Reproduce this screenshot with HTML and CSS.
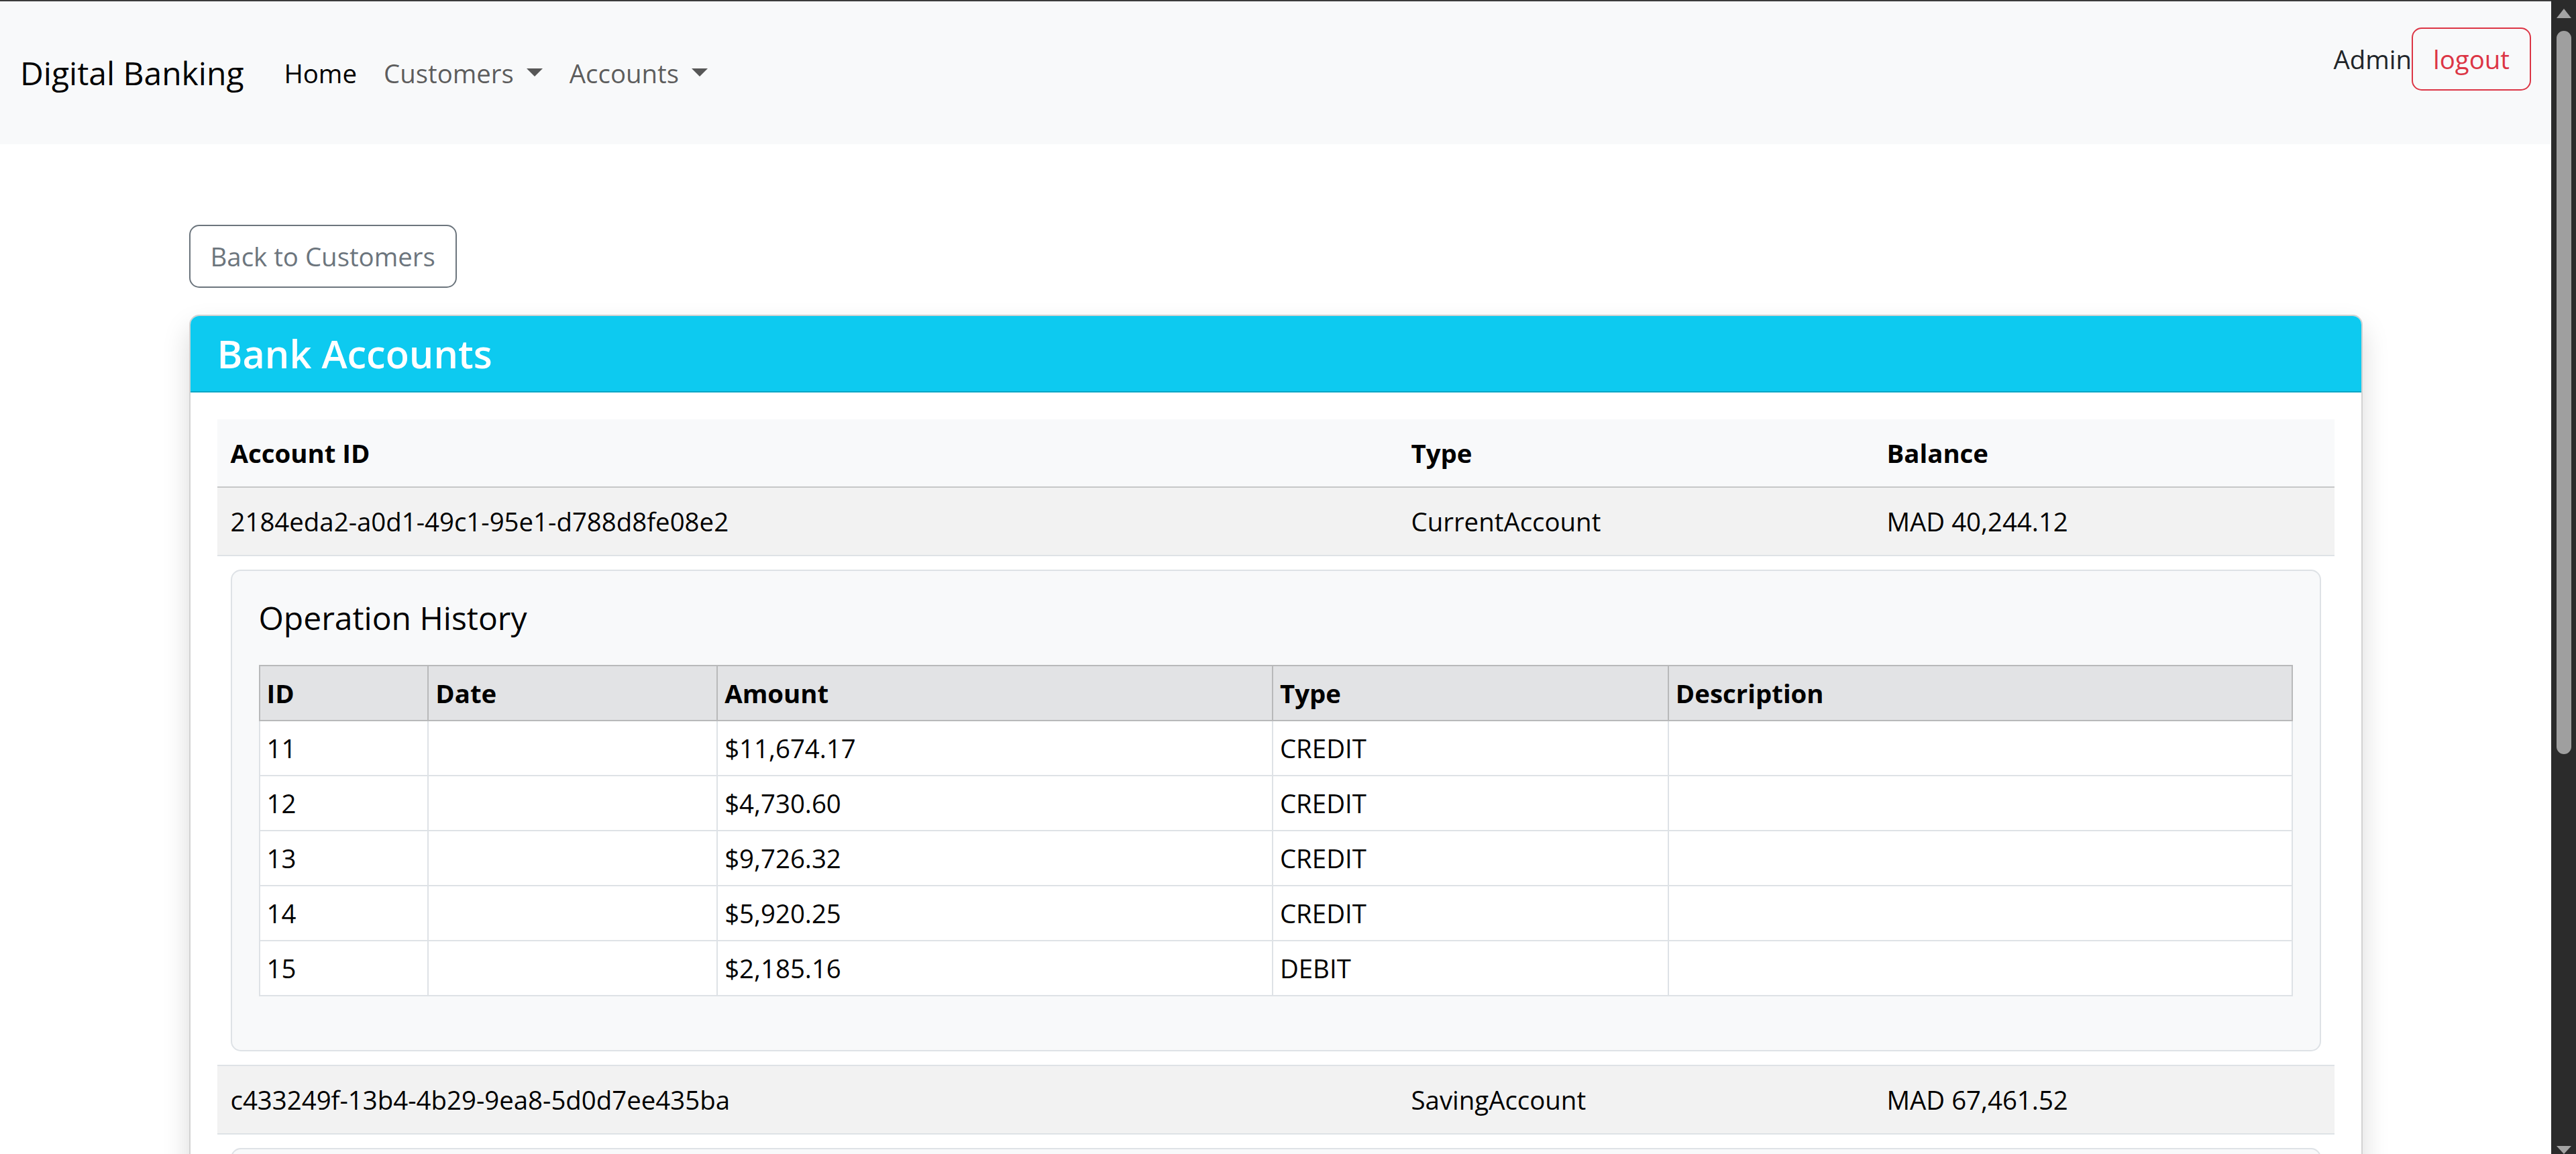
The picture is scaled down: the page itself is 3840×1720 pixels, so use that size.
FILE: index.html
```html
<!DOCTYPE html>
<html lang="en">
<head>
<meta charset="utf-8">
<title>Digital Banking</title>
<link rel="stylesheet" href="styles.css">
</head>
<body>
<div class="screen">
  <div class="page">
    <nav class="navbar">
      <a class="brand" href="#">Digital Banking</a>
      <ul class="nav">
        <li><a class="nav-link active" href="#">Home</a></li>
        <li><a class="nav-link dropdown" href="#">Customers</a></li>
        <li><a class="nav-link dropdown" href="#">Accounts</a></li>
      </ul>
      <div class="user">
        <span class="user-name">Admin</span>
        <button class="btn btn-danger" type="button">logout</button>
      </div>
    </nav>

    <main class="container">
      <div class="toolbar">
        <button class="btn btn-secondary" type="button">Back to Customers</button>
      </div>

      <section class="card">
        <header class="card-header"><h4>Bank Accounts</h4></header>
        <div class="card-body">
          <table class="accounts">
            <thead>
              <tr>
                <th class="col-id">Account ID</th>
                <th class="col-type">Type</th>
                <th class="col-balance">Balance</th>
              </tr>
            </thead>
            <tbody>
              <tr class="striped">
                <td>2184eda2-a0d1-49c1-95e1-d788d8fe08e2</td>
                <td>CurrentAccount</td>
                <td>MAD 40,244.12</td>
              </tr>
              <tr class="detail">
                <td colspan="3">
                  <div class="ops-card">
                    <h5>Operation History</h5>
                    <table class="ops">
                      <thead>
                        <tr>
                          <th class="c-id">ID</th>
                          <th class="c-date">Date</th>
                          <th class="c-amount">Amount</th>
                          <th class="c-type">Type</th>
                          <th class="c-desc">Description</th>
                        </tr>
                      </thead>
                      <tbody>
                        <tr><td>11</td><td></td><td>$11,674.17</td><td>CREDIT</td><td></td></tr>
                        <tr><td>12</td><td></td><td>$4,730.60</td><td>CREDIT</td><td></td></tr>
                        <tr><td>13</td><td></td><td>$9,726.32</td><td>CREDIT</td><td></td></tr>
                        <tr><td>14</td><td></td><td>$5,920.25</td><td>CREDIT</td><td></td></tr>
                        <tr><td>15</td><td></td><td>$2,185.16</td><td>DEBIT</td><td></td></tr>
                      </tbody>
                    </table>
                  </div>
                </td>
              </tr>
              <tr class="striped">
                <td>c433249f-13b4-4b29-9ea8-5d0d7ee435ba</td>
                <td>SavingAccount</td>
                <td>MAD 67,461.52</td>
              </tr>
              <tr class="detail">
                <td colspan="3">
                  <div class="ops-card ops-card-folded"></div>
                </td>
              </tr>
            </tbody>
          </table>
        </div>
      </section>
    </main>
  </div>

  <div class="scrollbar" aria-hidden="true">
    <div class="sb-up"></div>
    <div class="sb-thumb"></div>
    <div class="sb-down"></div>
  </div>
</div>
</body>
</html>
```

FILE: styles.css
```css
* {
  box-sizing: border-box;
}

html,
body {
  margin: 0;
  height: 100%;
}

body {
  font-family: "Open Sans", "Noto Sans", sans-serif;
  font-size: 38.4px;
  line-height: 60px;
  color: #212529;
  background: #fff;
  overflow: hidden;
}

.screen {
  display: flex;
  height: 1720px;
}

.page {
  flex: 1;
  min-width: 0;
  overflow: hidden;
  border-top: 2px solid #3b3b3b;
}

/* ---------- navbar ---------- */
.navbar {
  display: flex;
  align-items: center;
  height: 213px;
  padding: 0 30px;
  background: #f8f9fa;
}

.brand {
  font-size: 48px;
  line-height: 75px;
  padding: 12.5px 0;
  margin-right: 40px;
  color: #000;
  text-decoration: none;
}

.nav {
  display: flex;
  list-style: none;
  margin: 0;
  padding: 0;
}

.nav-link {
  display: block;
  padding: 20px;
  color: rgba(0, 0, 0, 0.65);
  text-decoration: none;
}

.nav-link.active {
  color: #000;
}

.dropdown::after {
  content: "";
  display: inline-block;
  margin-left: 19px;
  vertical-align: 10px;
  border-top: 12px solid;
  border-left: 12px solid transparent;
  border-right: 12px solid transparent;
}

.user {
  margin-left: auto;
  display: flex;
  align-items: center;
  margin-bottom: 41px;
}

.user-name {
  color: #212529;
}

/* ---------- buttons ---------- */
.btn {
  font-family: inherit;
  font-size: 38.4px;
  line-height: 60px;
  padding: 15px 30px;
  border: 2px solid;
  border-radius: 15px;
  background: transparent;
  cursor: pointer;
}

.btn-danger {
  color: #dc3545;
  border-color: #dc3545;
}

.btn-secondary {
  color: #6c757d;
  border-color: #6c757d;
}

/* ---------- main ---------- */
.container {
  width: 3240px;
  margin: 0 auto;
  padding-top: 120px;
}

.toolbar {
  display: flex;
  margin-bottom: 40px;
}

.card {
  background: #fff;
  border: 2px solid rgba(0, 0, 0, 0.175);
  border-radius: 15px;
  box-shadow: 0 20px 40px rgba(0, 0, 0, 0.15);
  overflow: hidden;
}

.card-header {
  background: #0dcaf0;
  padding: 20px 40px;
  border-bottom: 2px solid rgba(0, 0, 0, 0.175);
}

.card-header h4 {
  margin: 0;
  font-size: 57.6px;
  line-height: 72px;
  font-weight: 600;
  color: #fff;
}

.card-body {
  padding: 40px;
}

/* ---------- accounts table ---------- */
.accounts {
  width: 100%;
  border-collapse: collapse;
  table-layout: fixed;
}

.accounts th,
.accounts td {
  padding: 20px;
  text-align: left;
  vertical-align: top;
  font-weight: 400;
  border-bottom: 2px solid #dee2e6;
}

.accounts thead th {
  background: #f8f9fa;
  color: #000;
  font-weight: 700;
  border-bottom-color: #c6c7c8;
}

.accounts .col-id {
  width: 1760px;
}

.accounts .col-type {
  width: 709px;
}

.accounts .col-balance {
  width: 687px;
}

.accounts .striped td {
  background: #f2f2f2;
  color: #000;
}

.accounts .detail > td {
  padding: 20px;
  background: #fff;
}

/* ---------- operations card ---------- */
.ops-card {
  background: #f8f9fa;
  border: 2px solid #dee2e6;
  border-radius: 15px;
  padding: 40px;
}

.ops-card-folded {
  min-height: 200px;
}

.ops-card h5 {
  margin: 0 0 40px;
  font-size: 48px;
  line-height: 60px;
  font-weight: 500;
  color: #000;
}

.ops {
  width: 100%;
  border-collapse: collapse;
  table-layout: fixed;
  margin-bottom: 40px;
  background: #fff;
}

.ops th,
.ops td {
  padding: 10px;
  text-align: left;
  font-weight: 400;
  border: 2px solid #dee2e6;
  color: #000;
}

.ops thead th {
  background: #e2e3e5;
  border-color: #b8b9ba;
  font-weight: 700;
}

.ops .c-id { width: 8.31%; }
.ops .c-date { width: 14.22%; }
.ops .c-amount { width: 27.32%; }
.ops .c-type { width: 19.47%; }
.ops .c-desc { width: 30.68%; }

/* ---------- scrollbar ---------- */
.scrollbar {
  flex: none;
  width: 37px;
  background: #2b2b2b;
  display: flex;
  flex-direction: column;
  align-items: center;
}

.sb-up {
  margin-top: 13px;
  width: 0;
  height: 0;
  border-left: 11px solid transparent;
  border-right: 11px solid transparent;
  border-bottom: 14px solid #a3a3a3;
}

.sb-thumb {
  margin-top: 19px;
  width: 22px;
  height: 1078px;
  border-radius: 11px;
  background: #9f9f9f;
}

.sb-down {
  margin-top: auto;
  width: 0;
  height: 0;
  border-left: 11px solid transparent;
  border-right: 11px solid transparent;
  border-top: 12px solid #a3a3a3;
}
```
